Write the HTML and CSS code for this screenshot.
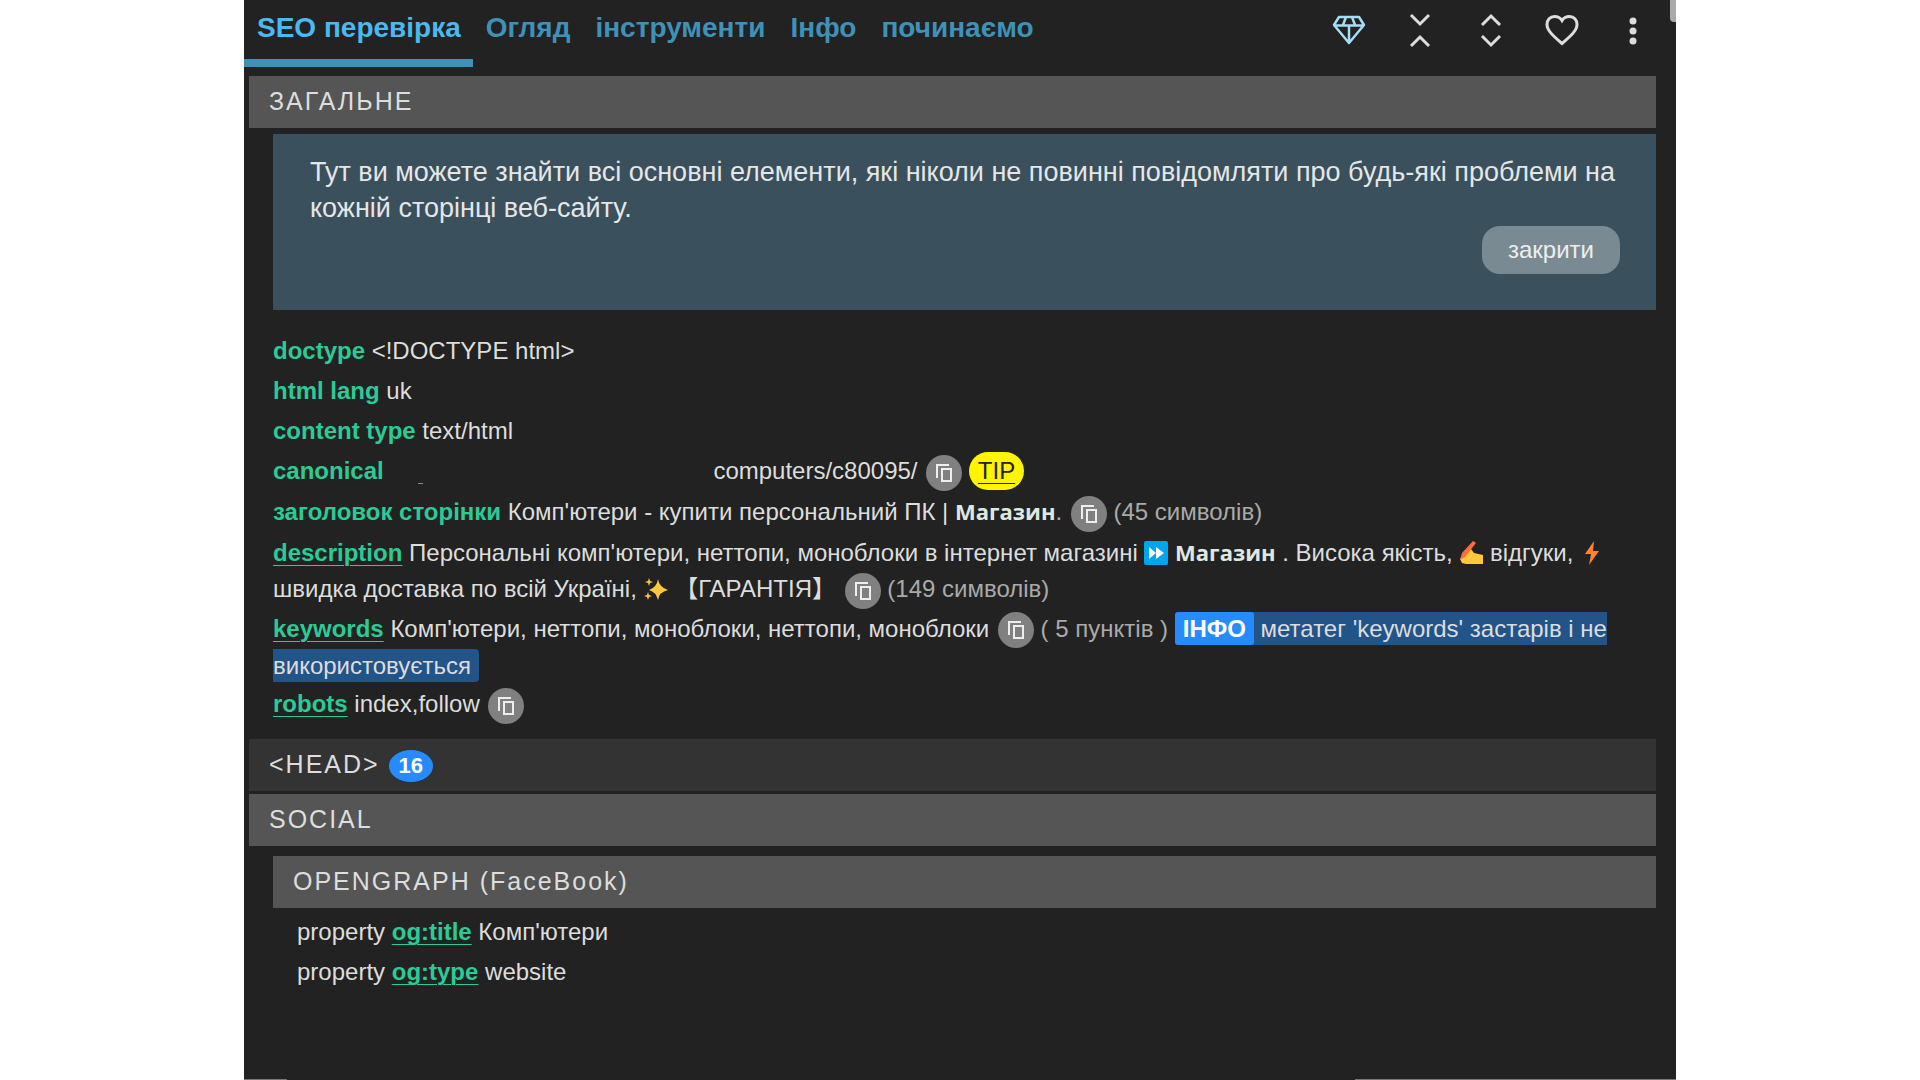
FILE: index.html
```html
<!DOCTYPE html>
<html lang="uk">
<head>
<meta charset="utf-8">
<title>SEO перевірка</title>
<link rel="stylesheet" href="styles.css">
</head>
<body>
<svg class="sprite" aria-hidden="true">
  <symbol id="copy" viewBox="0 0 36 36">
    <path d="M11 23V10h12" fill="none" stroke="#eee" stroke-width="2"/>
    <rect x="16" y="14" width="9" height="12" fill="none" stroke="#eee" stroke-width="2"/>
  </symbol>
</svg>
<main class="panel">
  <span class="thumb"></span>
  <header class="topbar">
    <nav class="tabs">
      <a class="tab active" href="#seo">SEO перевірка</a>
      <a class="tab" href="#overview">Огляд</a>
      <a class="tab" href="#tools">інструменти</a>
      <a class="tab" href="#info">Інфо</a>
      <a class="tab" href="#start">починаємо</a>
    </nav>
    <div class="actions">
      <button class="icon" aria-label="Premium"><svg viewBox="0 0 36 36" fill="none" stroke="#a6dcf5" stroke-width="2.5" stroke-linejoin="round"><path d="M8 5h20l5 8-15 18L3 13zM3 13.500h30M15 5l-3 8M21 5l3 8M18 13v18"/></svg></button>
      <button class="icon" aria-label="Згорнути"><svg viewBox="0 0 36 36" fill="none" stroke="#ddd" stroke-width="3"><path d="M9 3l9 9 9-9M9 34l9-9 9 9"/></svg></button>
      <button class="icon" aria-label="Розгорнути"><svg viewBox="0 0 36 36" fill="none" stroke="#ddd" stroke-width="3"><path d="M9 13l9-9 9 9M9 24l9 9 9-9"/></svg></button>
      <button class="icon" aria-label="Вподобати"><svg viewBox="0 0 36 36" fill="none" stroke="#ddd" stroke-width="3"><path d="M18 31.500C8 23 3 18 3 12.500C3 8 6 4.500 10.500 4.500C14 4.500 16.500 6 18 8.500C19.500 6 22 4.500 25.500 4.500C30 4.500 33 8 33 12.500C33 18 28 23 18 31.500z"/></svg></button>
      <button class="icon" aria-label="Меню"><svg viewBox="0 0 36 36" fill="#ddd"><circle cx="18" cy="9" r="3.500"/><circle cx="18" cy="19" r="3.500"/><circle cx="18" cy="29" r="3.500"/></svg></button>
    </div>
  </header>
  <div class="content">
    <h2 class="section">ЗАГАЛЬНЕ</h2>
    <div class="group">
      <section class="intro">
        <p>Тут ви можете знайти всі основні елементи, які ніколи не повинні повідомляти про будь-які проблеми на кожній сторінці веб-сайту.</p>
        <button class="close">закрити</button>
      </section>
      <ul class="rows">
        <li><b>doctype</b> &lt;!DOCTYPE html&gt;</li>
        <li><b>html lang</b> uk</li>
        <li><b>content type</b> text/html</li>
        <li><b>canonical</b> <span class="blank"><i></i></span>computers/c80095/ <button class="copy" aria-label="Копіювати"><svg><use href="#copy"/></svg></button> <a class="tip" href="#tip">TIP</a></li>
        <li><b>заголовок сторінки</b> Комп'ютери - купити персональний ПК | <span class="shop">Магазин</span><span class="count">.</span> <button class="copy" aria-label="Копіювати"><svg><use href="#copy"/></svg></button> <span class="count">(45 символів)</span></li>
        <li class="long"><a href="#description">description</a> Персональні комп'ютери, неттопи, моноблоки в інтернет магазині
          <svg class="emoji" viewBox="0 0 24 24"><rect width="24" height="24" rx="2" fill="#00a4ef"/><path d="M5 6l7 6-7 6zM12 6l8 6-8 6z" fill="#fff"/></svg>
          <span class="shop">Магазин</span> . Висока якість,
          <svg class="emoji" viewBox="0 0 24 24"><path d="M1 18l6-9 5-1 3 4 9 2v9H7l-4-1z" fill="#ffc83d"/><path d="M1 19l2-7L14 0l3 2L6 16z" fill="#ff6d3b"/></svg>
          відгуки,
          <svg class="emoji" viewBox="0 0 24 24"><path d="M14 0L5 13h6l-2 11 10-14h-6z" fill="#ff822d"/></svg>
          швидка доставка по всій Україні,
          <svg class="emoji" viewBox="0 0 24 24"><path d="M14 2q1 8 10 11-9 2-10 10-2-8-9-10 8-3 9-11zM5 1l1 3 3 1-3 1-1 3-1-3-3-1 3-1zM4 15l1 3 3 1-3 1-1 3-1-3-3-1 3-1z" fill="#ffc83d"/></svg>
          【ГАРАНТІЯ】 <button class="copy" aria-label="Копіювати"><svg><use href="#copy"/></svg></button> <span class="count">(149 символів)</span></li>
        <li class="long"><a href="#keywords">keywords</a> Комп'ютери, неттопи, моноблоки, неттопи, моноблоки <button class="copy" aria-label="Копіювати"><svg><use href="#copy"/></svg></button> <span class="count">( 5 пунктів )</span> <span class="note"><strong>ІНФО</strong> метатег 'keywords' застарів і не використовується</span></li>
        <li><a href="#robots">robots</a> index,follow <button class="copy" aria-label="Копіювати"><svg><use href="#copy"/></svg></button></li>
      </ul>
    </div>
    <h2 class="section dark">&lt;HEAD&gt; <span class="badge">16</span></h2>
    <h2 class="section">SOCIAL</h2>
    <div class="group">
      <h3 class="section">OPENGRAPH (FaceBook)</h3>
      <ul class="rows props">
        <li>property <a href="#og-title">og:title</a> Комп'ютери</li>
        <li>property <a href="#og-type">og:type</a> website</li>
      </ul>
    </div>
  </div>
  <footer class="edge"><span></span><span></span></footer>
</main>
</body>
</html>
```
FILE: styles.css
```css
* { box-sizing: border-box; }
body { margin: 0; background: #fff; font: 24px/30px "Liberation Sans", "Noto Sans CJK SC", sans-serif; color: #ddd; }
h2, h3, p, ul { margin: 0; padding: 0; }
button { border: 0; padding: 0; font: inherit; color: inherit; background: none; }
.sprite { position: absolute; width: 0; height: 0; }
.panel { position: relative; display: flex; flex-direction: column; max-width: 1432px; min-height: 100vh; margin: 0 auto; background: #222; }
.thumb { position: absolute; top: 0; right: 0; width: 6px; height: 22px; background: #aaa; border-radius: 0 0 0 4px; }
.topbar { display: flex; justify-content: space-between; height: 67px; }
.tabs { display: flex; }
.tab { padding: 12px 12px 0 13px; font-size: 28px; line-height: 32px; font-weight: bold; color: #3f91b8; text-decoration: none; }
.tab.active { color: #4bb9ee; border-bottom: 8px solid #3f91b8; }
.actions { display: flex; gap: 35px; padding: 12px 25px 0 0; }
.icon { width: 36px; height: 36px; }
.icon svg { display: block; width: 36px; height: 36px; }
.content { flex: 1; padding: 9px 20px 0 5px; }
.section { height: 52px; padding: 0 20px; background: #555; font-size: 25px; line-height: 51px; font-weight: normal; letter-spacing: 2px; }
.dark { background: #333; margin-bottom: 3px; }
.group { padding-left: 24px; }
.intro { margin-top: 6px; height: 176px; padding: 20px 36px 20px 37px; background: #3a505c; font-size: 27px; line-height: 36px; color: #e6e6e6; display: flex; flex-direction: column; }
.close { align-self: flex-end; width: 138px; height: 48px; border-radius: 18px; background: #7a8a92; font-size: 24px; color: #eee; }
.rows { list-style: none; padding: 21px 30px 15px 0; }
.rows li { line-height: 40px; }
.rows b, .rows a { color: #2bcb96; font-weight: bold; text-decoration-thickness: 1px; text-underline-offset: 4px; }
.rows .long { padding-top: 2px; line-height: 36px; }
.blank { display: inline-block; width: 323px; }
.blank i { display: inline-block; width: 5px; height: 1px; margin-left: 28px; background: #888; vertical-align: -5px; }
.copy { width: 36px; height: 36px; margin-left: 2px; border-radius: 50%; background: #808080; vertical-align: middle; }
.copy svg { display: block; width: 36px; height: 36px; }
.rows .tip { display: inline-block; padding: 0 9px; border-radius: 19px; background: #fff500; color: #222; font-weight: normal; line-height: 38px; }
.shop { font-family: "Open Sans", sans-serif; font-weight: 700; font-size: 22px; color: #dfe8e0; }
.count { color: #aaa; }
.emoji { width: 24px; height: 24px; vertical-align: -4px; }
.note { background: #235487; padding: 3px 8px 3px 0; border-radius: 4px; }
.note strong { background: #268bff; color: #fff; padding: 3px 8px; border-radius: 3px; }
.badge { display: inline-block; height: 32px; padding: 0 10px; border-radius: 50%; background: #268bff; color: #fff; font-size: 22px; line-height: 32px; font-weight: bold; letter-spacing: 0; }
h3.section { margin-top: 10px; }
.rows.props { padding: 4px 0 0 24px; }
.edge { display: flex; justify-content: space-between; height: 1px; }
.edge span { width: 43px; background: #777; }
.edge span:last-child { width: 321px; }
```
